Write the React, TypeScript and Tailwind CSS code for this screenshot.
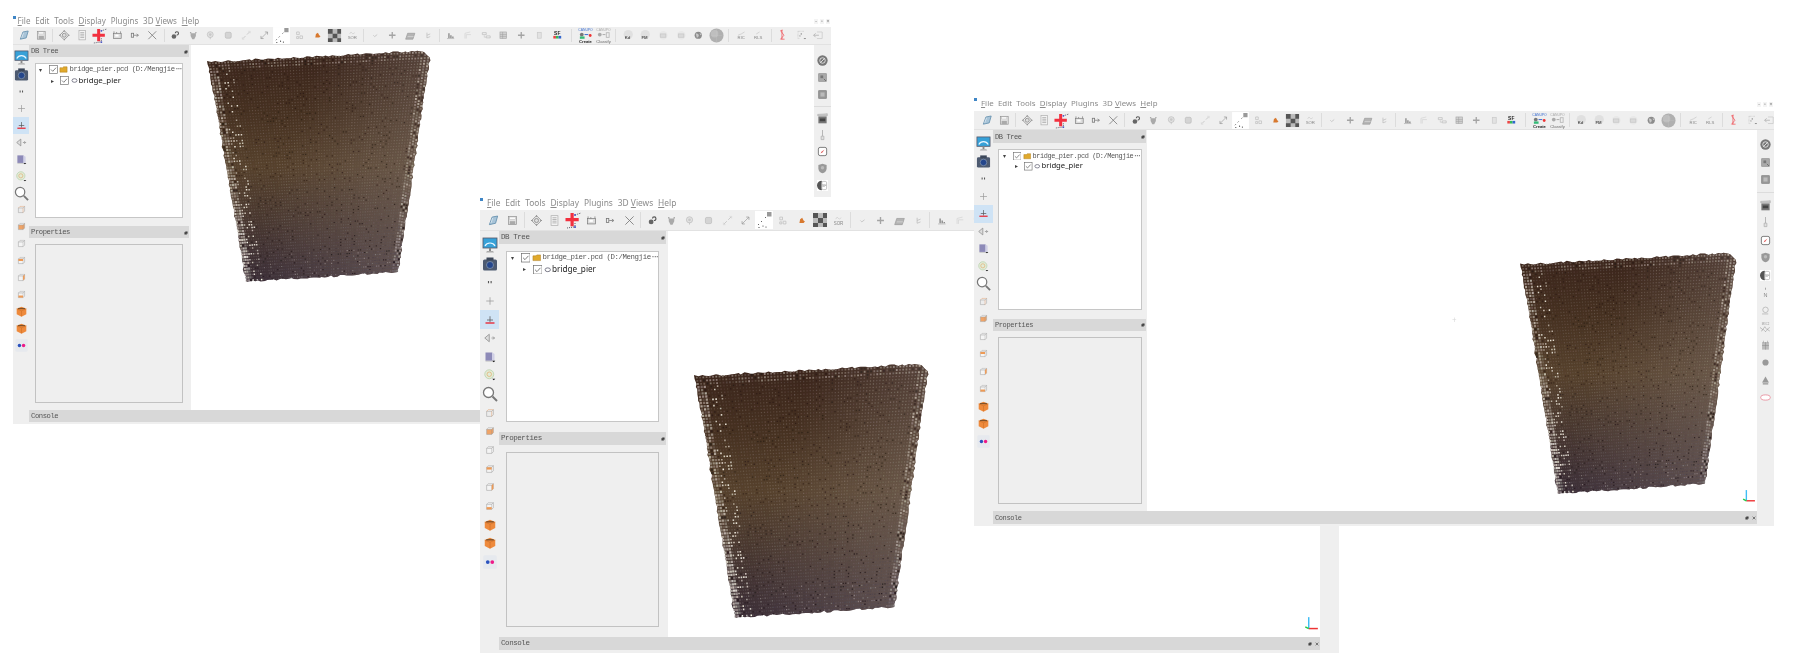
import React, { ReactNode, useId, useMemo } from "react";

const sans = "font-['Noto_Sans',sans-serif]";
const mono = "font-['Liberation_Mono',monospace]";

const T = ({ x, y, s, c = "#666", w = 400, children }: { x: number; y: number; s: number; c?: string; w?: number; children: string }) => (
  <text x={x} y={y} fontSize={s} fill={c} fontWeight={w} textAnchor="middle" fontFamily="Liberation Sans, sans-serif">{children}</text>
);

const box = (fill: string, top = "#8a8a8a") => (
  <g>
    <path d="M2 5h9l3-3v9l-3 3H2z" fill={fill} stroke="#a2a2a2" />
    <path d="M2 5l3-3h9M11 5v9" fill="none" stroke={top} strokeWidth=".6" />
  </g>
);

const crate = () => (
  <g>
    <path d="M8 1l7 3v8l-7 3.5L1 12V4z" fill="#ee8a3c" />
    <path d="M1 4l7 3 7-3M8 7v8" stroke="#c96a22" fill="none" strokeWidth=".7" />
    <path d="M3 2.8h10v1.8H3z" fill="#5c3d22" opacity=".75" />
  </g>
);

const icons: Record<string, ReactNode> = {
  open: <g><path d="M2 14L6 3l8-1.5L11 12z" fill="#a8c4d8" stroke="#5f8cab" strokeWidth="1.2" /><path d="M4 12l3-8" stroke="#e8f2f8" /></g>,
  save: <g><rect x="2" y="2" width="12" height="12" fill="#e2e2e2" stroke="#8f8f8f" /><rect x="4" y="9" width="8" height="5" fill="#aaa" /><rect x="4" y="3" width="8" height="3" fill="#fff" stroke="#aaa" strokeWidth=".5" /></g>,
  target: <g><path d="M8 1l7 7-7 7-7-7z" fill="none" stroke="#888" strokeWidth="1.2" /><circle cx="8" cy="8" r="3" fill="#ddd" stroke="#777" /><path d="M8 0v3M8 13v3M0 8h3M13 8h3" stroke="#888" /></g>,
  list: <g><rect x="3" y="1" width="10" height="14" fill="#f4f4f4" stroke="#aaa" /><path d="M5 4h6M5 6.5h6M5 9h6M5 11.5h6" stroke="#999" /></g>,
  pick: <g><path d="M5.5 1h3.2v5h5v3.2h-5v5H5.5v-5h-5V6h5z" fill="#f2303f" /><path d="M10 3l6-2M10 16v-5M2 16l7-1" stroke="#334" strokeDasharray="1 1" strokeWidth=".8" /><circle cx="10" cy="15" r="1" fill="#4a55cc" /><circle cx="10" cy="3" r="1" fill="#4a55cc" /></g>,
  bbox: <g><rect x="2" y="5" width="12" height="8" fill="#ddd" stroke="#777" /><path d="M3 2v3M7 3v2M13 2v3" stroke="#777" /><rect x="5" y="7" width="5" height="3" fill="#fff" /></g>,
  link: <g><rect x="2" y="5" width="3.5" height="6" fill="none" stroke="#777" strokeWidth="1.2" /><path d="M6 8h6M10 6l3 2-3 2" fill="none" stroke="#777" strokeWidth="1.1" /></g>,
  x: <path d="M2 2l12 12M14 2L2 14" stroke="#777" strokeWidth="1.2" />,
  merge: <g><circle cx="6" cy="10" r="3.5" fill="#666" /><path d="M8 5c0-3 5-3 5 0s-3 3-3 3" fill="none" stroke="#555" strokeWidth="1.6" /></g>,
  hand: <path d="M4 5h8v4l-2.5 5h-3L4 9zM3 3h2v2H3zM11 3h2v2h-2z" fill="#aaa" />,
  sphere: <g><circle cx="8" cy="7" r="4.5" fill="#e2e2e2" stroke="#bbb" /><circle cx="8" cy="7" r="2" fill="#c8c8c8" /><path d="M8 11v3" stroke="#bbb" /></g>,
  square: <rect x="3.5" y="3.5" width="9" height="9" rx="2" fill="#d4d4d4" stroke="#bbb" />,
  arrowsIn: <g><path d="M3 13l4-4M13 3L9 7" stroke="#c8c8c8" strokeWidth="1.4" /><path d="M11 2l3 0 0 3M2 11v3h3" fill="none" stroke="#d4d4d4" /></g>,
  arrowsOut: <g><path d="M3 13L13 3" stroke="#aaa" strokeWidth="1.2" /><path d="M9 3h4v4M3 9v4h4" fill="none" stroke="#999" strokeWidth="1.1" /></g>,
  scatter: <g><rect x="-1" y="-1" width="18" height="18" fill="#fff" /><path d="M2 13l1-1M5 10l1-1M9 6l1-1" stroke="#555" strokeWidth=".9" /><rect x="11" y="0" width="4.5" height="4.5" fill="#999" /><circle cx="7" cy="14" r=".6" fill="#333" /><circle cx="3" cy="15.5" r=".6" fill="#333" /><circle cx="10" cy="15" r=".6" fill="#333" /></g>,
  sample: <path d="M4 3h4v4H4zM9 9h4v4H9zM4 10h3v3H4z" fill="none" stroke="#bbb" />,
  orange: <path d="M6 6l3-2 2 4 2 1.5-2 2H5z" fill="#d8792f" />,
  checker: <g><rect x="1" y="1" width="14" height="14" fill="#bbb" /><path d="M1 1h5v5H1zM11 1h4v5h-4zM6 6h5v5H6zM1 11h5v4H1zM11 11h4v4h-4z" fill="#555" /></g>,
  sor: <g><path d="M4 6l2-3 3 3 3-2" fill="none" stroke="#ccc" /><T x={8} y={14} s={6.5} c="#888">SOR</T></g>,
  check: <path d="M5 8l2 2 4-3" fill="none" stroke="#bbb" strokeWidth="1.1" />,
  plus: <path d="M7 3h2v4h4v2H9v4H7V9H3V7h4z" fill="#a4a4a4" />,
  plane: <g><path d="M1 14l3-9h11l-3 9z" fill="#b4b4b4" stroke="#999" /><path d="M4 10h9" stroke="#ddd" /></g>,
  tree: <path d="M6 4v8M6 8l5-2M6 12l5-2" fill="none" stroke="#bbb" strokeWidth="1.1" />,
  hist: <g><path d="M5 5h2v7H5zM8 8h2v4H8zM11 10h2v2h-2z" fill="#888" /><path d="M3 13h11" stroke="#aaa" /></g>,
  gridA: <path d="M3 13V5l8-2M5 13V7h7" fill="none" stroke="#d4d4d4" strokeWidth="1.1" />,
  gridB: <g><path d="M2 4h6v3H2zM8 9h6v3H8z" fill="none" stroke="#bbb" /><path d="M5 8v3h3" fill="none" stroke="#c8c8c8" /></g>,
  gridC: <g><rect x="3" y="3" width="10" height="10" fill="#d0d0d0" stroke="#aaa" /><path d="M3 7h10M3 10h10M7 3v10" stroke="#999" strokeWidth=".7" /></g>,
  stack: <rect x="5" y="3.5" width="6" height="9" fill="#e2e2e2" stroke="#c8c8c8" />,
  sf: <g><T x={8} y={7} s={7.5} c="#222" w={700}>SF</T><rect x="2" y="9" width="4" height="4" fill="#e44" /><rect x="6" y="9" width="4" height="4" fill="#3b5" /><rect x="10" y="9" width="4" height="4" fill="#36c" /></g>,
  canCreate: <g><T x={8} y={3} s={3.6} c="#3c6fd0">CANUPO</T><circle cx="4" cy="7" r="2" fill="#777" /><path d="M7 7h4" stroke="#36c" /><circle cx="13" cy="8" r="1.5" fill="#e33" /><rect x="2" y="9" width="5" height="2.5" fill="#3b7" /><T x={8} y={16} s={4.4} c="#222" w={700}>Create</T></g>,
  canClassify: <g><T x={8} y={3} s={3.6} c="#aaa">CANUPO</T><circle cx="4" cy="7" r="2" fill="#aaa" /><path d="M7 7h3" stroke="#aaa" /><rect x="11" y="5" width="3" height="5" fill="none" stroke="#bbb" /><T x={8} y={16} s={4.4} c="#666">Classify</T></g>,
  kd: <g><circle cx="8" cy="7" r="7" fill="#e0e0e0" /><T x={7} y={14} s={6.5} c="#555" w={700}>Kd</T></g>,
  fm: <g><circle cx="8" cy="7" r="7" fill="#e0e0e0" /><T x={7} y={14} s={6.5} c="#555" w={700}>FM</T></g>,
  cir2: <g><circle cx="8" cy="8" r="6.5" fill="#e8e8e8" /><rect x="4" y="6" width="8" height="5" fill="#dadada" stroke="#c4c4c4" /></g>,
  globe: <g><circle cx="8" cy="8" r="5.5" fill="#8c8c8c" /><path d="M4 5l4 1 1 3-3 3zM10 4l3 3-2 1z" fill="#c8c8c8" /></g>,
  ball: <g><circle cx="8" cy="8" r="7.5" fill="#b0b0b0" /><path d="M2 8h12M8 1v14" stroke="#bbb" strokeWidth=".6" /><circle cx="6" cy="6" r="4" fill="#c8c8c8" opacity=".6" /></g>,
  ric: <g><path d="M3 8l5-2M8 6l5-3" stroke="#c4c4c4" /><T x={8} y={14} s={6.5} c="#888">RIC</T></g>,
  rls: <g><path d="M5 6l5-3" stroke="#c4c4c4" /><T x={8} y={14} s={6.5} c="#888">RLS</T></g>,
  redS: <path d="M7 0L4 1l5 7-5 6h6M6 0v14" fill="none" stroke="#ef4d52" strokeWidth="1.1" />,
  scatter2: <g><path d="M3 2h9M3 2v11h2" fill="none" stroke="#bbb" strokeDasharray="1 1" /><circle cx="8" cy="6" r="1" fill="#777" /><circle cx="6" cy="9" r="1" fill="#999" /><path d="M12 13h3" stroke="#888" strokeWidth="1.4" /></g>,
  exportArrow: <g><path d="M6 3h8v10H6" fill="none" stroke="#c4c4c4" /><path d="M1 8h8M4 5L1 8l3 3" fill="none" stroke="#aaa" strokeWidth="1.1" /></g>,
  monitor: <g><rect x="1" y="1" width="14" height="10" fill="#37a1d8" stroke="#556" strokeWidth=".8" /><path d="M3 9c2-4 8-4 10 0" fill="none" stroke="#eaf6ff" strokeWidth="1.2" /><path d="M5 14h6l1 1.5H4z" fill="#aaa" /><path d="M8 11v3" stroke="#888" strokeWidth="2" /></g>,
  camera: <g><rect x="1" y="3.5" width="14" height="11" rx="1.5" fill="#4d5a70" /><rect x="4.5" y="1.5" width="7" height="3" fill="#3c4759" /><circle cx="8" cy="9" r="3.5" fill="#24468c" stroke="#9ab" strokeWidth=".6" /></g>,
  mm: <path d="M6 6.5v3M9.5 6.5v3" stroke="#555" strokeWidth="1.5" />,
  thinPlus: <path d="M8 3v10M3 8h10" stroke="#999" strokeWidth="1" />,
  ground: <g><path d="M8 3v8M4 8h8" stroke="#555" strokeWidth="1" /><path d="M2 11h12v2H2z" fill="#e63946" /></g>,
  cone: <g><path d="M1 8l6-5v10z" fill="#ddd" stroke="#888" /><path d="M10 8h4M12 6l2 2-2 2" fill="none" stroke="#888" /></g>,
  cube: <g><rect x="2" y="2" width="9" height="11" fill="#8d8ab8" /><path d="M11 2l3 2v9h-3z" fill="#d0cfe6" /><path d="M2 13h12v1H2z" fill="#bbb" /><path d="M11 13h4l-2 2z" fill="#111" /></g>,
  disc: <g><circle cx="7" cy="7" r="6" fill="#e2ebd8" stroke="#b8d0a8" /><circle cx="7" cy="7" r="3" fill="none" stroke="#e0b070" /><path d="M11 13h4l-2 2z" fill="#111" /></g>,
  magnifier: <g><circle cx="6.5" cy="6.5" r="5" fill="#fff" stroke="#777" strokeWidth="1.3" /><path d="M10.5 10.5l4.5 4.5" stroke="#777" strokeWidth="2" /></g>,
  v1: box("#ececec", "#e07a2e"),
  v2: box("#f0a467"),
  v3: box("#f4f4f4"),
  v4: <g>{box("#f4f4f4")}<path d="M2 5h9v4H2z" fill="#ee9a55" /></g>,
  v5: <g>{box("#f4f4f4")}<path d="M11 5l3-3v9l-3 3z" fill="#ee9a55" /></g>,
  v6: <g>{box("#f4f4f4")}<path d="M2 10h9v4H2z" fill="#ee9a55" /></g>,
  front: crate(),
  back: crate(),
  flickr: <g><rect x="-1" y="-1" width="18" height="18" rx="2" fill="#e6e9ee" /><circle cx="5" cy="8" r="2.5" fill="#2a52be" /><circle cx="11" cy="8" r="2.5" fill="#ee1a88" /></g>,
  ban: <g><circle cx="8" cy="8" r="7.5" fill="#777" /><circle cx="8" cy="8" r="4" fill="none" stroke="#eee" strokeWidth="1.2" /><path d="M5 11l6-6" stroke="#eee" strokeWidth="1.2" /></g>,
  sq1: <g><rect x="2.5" y="2.5" width="11" height="11" fill="#aaa" stroke="#888" /><rect x="5" y="5" width="4" height="4" fill="#777" /><path d="M10 10l3 3" stroke="#555" /></g>,
  sq2: <g><rect x="2.5" y="2.5" width="11" height="11" fill="#999" stroke="#777" /><rect x="5" y="5" width="6" height="6" fill="#bbb" /></g>,
  clap: <g><rect x="2" y="5" width="12" height="10" fill="#777" /><path d="M1 2l14-1v3H1z" fill="#ccc" stroke="#888" strokeWidth=".5" /><rect x="4" y="8" width="8" height="4" fill="#444" /></g>,
  probe: <g><path d="M8 0v9" stroke="#aaa" strokeWidth="1.2" /><path d="M6 9h4v5H6z" fill="#e0e0e0" stroke="#aaa" /></g>,
  compass: <g><rect x="2" y="2" width="12" height="12" rx="2.5" fill="#fff" stroke="#666" strokeWidth="1.2" /><path d="M11 5L8 9 5 11l2-3z" fill="#e05555" /></g>,
  shield: <g><path d="M2 3l6-2 6 2v5c0 4-3 6-6 7-3-1-6-3-6-7z" fill="#999" /><circle cx="8" cy="7" r="2.5" fill="#bbb" /></g>,
  head: <g><rect x="0" y="0" width="16" height="16" fill="#fff" /><path d="M7 1a7 7 0 000 14z" fill="#555" /><rect x="7" y="2" width="7" height="12" rx="2" fill="#fff" stroke="#aaa" /><T x={10.5} y={10} s={5} c="#888">SF</T></g>,
  north: <g><T x={8} y={14} s={8} c="#888">N</T><path d="M8 1v3" stroke="#888" /></g>,
  bubble: <g><circle cx="8" cy="7" r="4" fill="none" stroke="#aaa" /><path d="M3 13h9" stroke="#aaa" /></g>,
  mesh: <g><T x={8} y={4} s={4} c="#999">M3C2</T><path d="M0 8l4 3 3-4 3 4 4-3M2 13l3-2 3 3 3-3 3 2" fill="none" stroke="#777" strokeDasharray="1 .6" /></g>,
  sq3: <g><rect x="3" y="3" width="10" height="11" fill="#bbb" /><path d="M5 1v3M11 1v3M3 8h10M8 3v11" stroke="#888" strokeWidth=".7" /></g>,
  dot: <circle cx="8" cy="8" r="4.5" fill="#999" />,
  pyr: <g><path d="M8 2l5 9H3z" fill="#999" /><rect x="4" y="11" width="8" height="3" fill="#aaa" /></g>,
  ellipse: <ellipse cx="8" cy="8" rx="7" ry="3.8" fill="#fff" stroke="#e77e8f" strokeWidth="1.1" />,
};

const Icon = ({ name, className }: { name: string; className: string }) => (
  <svg viewBox="0 0 16 16" className={`${className} overflow-visible`}>{icons[name]}</svg>
);

const mix = (a: number[], b: number[], f: number) => a.map((v, i) => v + (b[i] - v) * f);
const hex = (c: number[]) => "#" + c.map((v) => Math.min(255, Math.round(Math.max(0, v) / 6) * 6).toString(16).padStart(2, "0")).join("");

type PierData = { outline: string; parts: [string, string][] };

function buildPier(): PierData {
  let seed = 12345;
  const rnd = () => {
    seed = (seed * 1664525 + 1013904223) >>> 0;
    return seed / 4294967296;
  };
  const stops = [[58, 36, 28], [68, 46, 34], [84, 64, 46], [70, 54, 50], [54, 42, 54]];
  const baseAt = (t: number) => {
    const p = Math.min(0.999, t) * 4;
    const i = Math.floor(p);
    return mix(stops[i], stops[i + 1], p - i);
  };
  const map = new Map<string, string>();
  const add = (col: string, x: number, y: number, w: number, h: number) => {
    map.set(col, (map.get(col) || "") + `M${x.toFixed(1)} ${y.toFixed(1)}h${w}v${h}h-${w}z`);
  };
  const pos = (s: number, t: number) => {
    const left = 38 * t;
    const right = 222 - 32 * t;
    const x = left + (right - left) * s;
    const topY = s > 0.965 ? 1 + (s - 0.965) * 190 : 12 - 11.5 * s;
    const botY = 232 - 10 * s;
    return [x, topY + t * (botY - topY)];
  };
  const pts: string[] = [];
  const jag = () => (rnd() - 0.5) * 2;
  const walk = (fn: (k: number) => number[], n: number) => {
    for (let k = 0; k < n; k++) {
      const [x, y] = fn(k / n);
      pts.push(`${(x + jag()).toFixed(1)},${(y + jag()).toFixed(1)}`);
    }
  };
  walk((k) => pos(k, 0), 70);
  walk((k) => pos(1, k), 70);
  walk((k) => pos(1 - k, 1), 50);
  walk((k) => pos(0, 1 - k), 70);

  const cols = 72;
  const rows = 76;
  const colNoise = Array.from({ length: cols }, () => rnd() * 0.07);
  for (let j = 0; j < rows; j++) {
    for (let i = 0; i < cols; i++) {
      const s = (i + 0.5) / cols;
      const t = (j + 0.5) / rows;
      const [x, y] = pos(s, t);
      let base = baseAt(t);
      const rg = Math.max(0, (s - 0.5) / 0.5) * Math.max(0, 1 - t * 1.25);
      base = mix(base, [126, 114, 108], rg * 0.6);
      let f = 0.02 + rnd() * 0.08 + s * 0.08 + colNoise[i];
      let size = 1.2;
      if (s < 0.035) {
        f = 0.15 + rnd() * 0.5;
        size = 2.1;
      } else if (s < 0.11) {
        if (rnd() < 0.3) {
          f = 0.5 + rnd() * 0.45;
          size = 1.5;
        }
      }
      if (t < 0.035) {
        f = 0.1 + rnd() * 0.35;
        size = 1.7;
      }
      if (s > 0.96) {
        f = 0.15 + rnd() * 0.4;
        size = 1.9;
      }
      if (t > 0.65 && s < 0.06) f = Math.min(1, f + 0.12);
      if (t > 0.88 && rnd() < 0.12) f += 0.2;
      const dark = rnd() < 0.1;
      const c = dark ? mix(base, [22, 14, 12], 0.4) : mix(base, [248, 244, 232], f);
      add(hex(c), x - size / 2, y - size / 2, size, size);
    }
  }
  return { outline: pts.join(" "), parts: [...map.entries()] };
}

const Pier = ({ className }: { className: string }) => {
  const data = useMemo(buildPier, []);
  const raw = useId().replace(/[^a-zA-Z0-9]/g, "");
  return (
    <svg viewBox="0 0 222 232" preserveAspectRatio="none" className={`absolute overflow-visible ${className}`}>
      <defs>
        <linearGradient id={`v${raw}`} x1="0" y1="0" x2="0" y2="1">
          <stop offset="0" stopColor="#3a241b" />
          <stop offset="0.25" stopColor="#453020" />
          <stop offset="0.5" stopColor="#56412c" />
          <stop offset="0.75" stopColor="#483730" />
          <stop offset="1" stopColor="#372a34" />
        </linearGradient>
        <linearGradient id={`h${raw}`} x1="0" y1="0" x2="1" y2="0.35">
          <stop offset="0.45" stopColor="#7e6f68" stopOpacity="0" />
          <stop offset="1" stopColor="#7e6f68" stopOpacity="0.5" />
        </linearGradient>
      </defs>
      <polygon points={data.outline} fill={`url(#v${raw})`} />
      <polygon points={data.outline} fill={`url(#h${raw})`} />
      {data.parts.map(([c, d]) => <path key={c} d={d} fill={c} />)}
    </svg>
  );
};

const Axis = ({ className }: { className: string }) => (
  <svg viewBox="0 0 14 14" className={`absolute ${className}`}>
    <path d="M5 1v10" stroke="#3fbdf5" strokeWidth="1.3" />
    <path d="M5 11h8" stroke="#ee3333" strokeWidth="1.3" />
    <path d="M5 11L2 9.5" stroke="#22cc44" strokeWidth="1.3" />
  </svg>
);

const Mini = ({ close = false }: { close?: boolean }) => (
  <span className="flex items-center gap-[3px] ml-auto pr-[1px]">
    <svg viewBox="0 0 6 6" className="w-[4px] h-[4px]"><path d="M1 2h3v3H1zM2 1h3v3" fill="#444" stroke="#444" strokeWidth=".6" /></svg>
    {close && <svg viewBox="0 0 6 6" className="w-[4px] h-[4px]"><path d="M1 1l4 4M5 1L1 5" stroke="#444" /></svg>}
  </span>
);

const Under = ({ text, at }: { text: string; at: number }) => (
  <span>{text.slice(0, at)}<span className="underline">{text[at]}</span>{text.slice(at + 1)}</span>
);

type Cfg = {
  pos: string; menu: string; tool: string; btn: string; ic: string; big: string; left: string; lbtn: string; lic: string; right: string; rsep: string;
  dock: string; head: string; hfont: string; treeBox: string; treePad: string; propBox: string; row: string; rowGap: string; indent: string; cb: string; file: string; item: string; consoleBar: string; consoleWrap: string;
  canvas: ReactNode; caret: string; sect: string;
};

const group1 = [["open", "save"], ["target", "list", "pick", "bbox", "link", "x"], ["merge", "hand", "sphere", "square", "arrowsIn", "arrowsOut", "scatter", "sample", "orange", "checker", "sor"], ["check", "plus", "plane", "tree"], ["hist", "gridA", "gridB", "gridC", "plus", "stack", "sf"], ["canCreate", "canClassify"], ["kd", "fm", "cir2", "cir2", "globe", "ball"], ["ric", "rls"], ["redS", "scatter2", "exportArrow"]];
const leftIcons = ["monitor", "camera", "mm", "thinPlus", "ground", "cone", "cube", "disc", "magnifier", "v1", "v2", "v3", "v4", "v5", "v6", "front", "back", "flickr"];
const rightA = ["ban", "sq1", "sq2"];
const rightB = ["clap", "probe", "compass", "shield", "head", "north", "bubble", "mesh", "sq3", "dot", "pyr", "ellipse"];
const bigTop = ["pick", "scatter", "canCreate", "canClassify", "ball", "checker"];
const bigLeft = ["monitor", "camera", "magnifier"];
const smallLeft = ["v1", "v2", "v3", "v4", "v5", "v6"];

const Check = ({ c }: { c: string }) => (
  <svg viewBox="0 0 10 10" className={c}>
    <rect x=".5" y=".5" width="9" height="9" fill="#fff" stroke="#666" strokeWidth=".7" />
    <path d="M2.2 5l2 2 3.6-4" fill="none" stroke="#555" strokeWidth=".8" />
  </svg>
);

const Window = ({ c }: { c: Cfg }) => (
  <div className={`absolute flex flex-col bg-white blur-[0.35px] ${c.pos}`}>
    <div className={`flex items-center shrink-0 relative text-[#8b8b8b] ${sans} ${c.menu}`}>
      <span className="absolute left-0 top-[1px] w-[3px] h-[3px] bg-[#3f86c6]" />
      <Under text="File" at={0} /><span>Edit</span><span>Tools</span><Under text="Display" at={0} /><span>Plugins</span><Under text="3D Views" at={3} /><Under text="Help" at={0} />
      <span className="ml-auto flex items-center gap-[2px] pr-[1px] text-[5px] leading-none text-[#777]">
        <span className="w-[4px] h-[5px] bg-[#f4f4f4] text-center">-</span>
        <span className="w-[4px] h-[5px] bg-[#f4f4f4] text-center">▫</span>
        <span className="w-[4px] h-[5px] bg-[#f4f4f4] text-center">×</span>
      </span>
    </div>
    <div className={`flex items-center shrink-0 overflow-hidden bg-[#efefef] border-b border-[#e2e2e2] ${c.tool}`}>
      {group1.map((g, gi) => (
        <React.Fragment key={gi}>
          {gi > 0 && <span className={`self-stretch my-[2px] w-[1px] shrink-0 bg-[#dcdcdc] ${gi === 5 ? "mx-[5px]" : gi > 5 ? "mx-[3px]" : "mx-[2px]"}`} />}
          {g.map((n, i) => (
            <span key={i} className={`flex items-center justify-center shrink-0 ${c.btn}`}>
              <Icon name={n} className={bigTop.includes(n) ? c.big : c.ic} />
            </span>
          ))}
        </React.Fragment>
      ))}
    </div>
    <div className="flex flex-1 min-h-0">
      <div className={`flex flex-col shrink-0 bg-[#efefef] ${c.left}`}>
        {leftIcons.map((n) => (
          <span key={n} className={`flex items-center justify-center shrink-0 ${c.lbtn} ${n === "ground" ? "bg-[#cfe3f5]" : ""}`}>
            <Icon name={n} className={`${bigLeft.includes(n) ? c.big : c.lic} ${smallLeft.includes(n) ? "scale-75" : ""}`} />
          </span>
        ))}
      </div>
      <div className="flex flex-col flex-1 min-w-0">
        <div className="flex flex-1 min-h-0">
          <div className={`shrink-0 bg-[#efefef] ${c.dock}`}>
            <div className={`flex items-center bg-[#d8d8d8] text-[#555] pt-[1px] ${mono} ${c.head} ${c.hfont}`}>DB Tree<Mini /></div>
            <div className={c.sect}>
              <div className={`bg-white border border-[#c6c6c6] overflow-hidden ${c.treeBox} ${c.treePad}`}>
                <div className={`flex items-center whitespace-nowrap ${c.row} ${c.rowGap}`}>
                  <span className={`text-[#444] leading-none ${c.caret}`}>▾</span>
                  <Check c={c.cb} />
                  <svg viewBox="0 0 10 10" className={c.cb}><path d="M1 3h3l1-1h4v6H1z" fill="#e0a92c" stroke="#a8781a" strokeWidth=".5" /></svg>
                  <span className={`text-[#555] ${mono} ${c.file}`}>bridge_pier.pcd (D:/Mengjie<span className="tracking-[-2.2px]">···</span></span>
                </div>
                <div className={`flex items-center whitespace-nowrap ${c.row} ${c.rowGap} ${c.indent}`}>
                  <span className={`text-[#444] leading-none ${c.caret}`}>▸</span>
                  <Check c={c.cb} />
                  <svg viewBox="0 0 10 10" className={`${c.cb} -ml-[1px] -mr-[1.5px]`}><ellipse cx="5" cy="5" rx="2.8" ry="2" fill="none" stroke="#667" strokeWidth=".9" /></svg>
                  <span className={`text-[#222] ${sans} ${c.item}`}>bridge_pier</span>
                </div>
              </div>
            </div>
            <div className={`flex items-center bg-[#d8d8d8] text-[#555] pt-[1px] ${mono} ${c.head} ${c.hfont}`}>Properties<Mini /></div>
            <div className={c.sect}>
              <div className={`bg-[#efefef] border border-[#c2c2c2] ${c.propBox}`} />
            </div>
          </div>
          <div className="relative flex-1 bg-white overflow-hidden">{c.canvas}</div>
        </div>
        <div className={`shrink-0 bg-[#efefef] ${c.consoleWrap}`}>
          <div className={`flex items-center bg-[#d8d8d8] text-[#555] pt-[1px] ${mono} ${c.consoleBar} ${c.hfont}`}>Console<Mini close /></div>
        </div>
      </div>
      <div className={`flex flex-col shrink-0 items-center bg-[#efefef] overflow-hidden ${c.right}`}>
        {rightA.map((n) => (
          <span key={n} className={`flex items-center justify-center shrink-0 ${c.lbtn}`}><Icon name={n} className={c.lic} /></span>
        ))}
        <span className={`w-full h-[1px] shrink-0 bg-[#dcdcdc] ${c.rsep}`} />
        {rightB.map((n) => (
          <span key={n} className={`flex items-center justify-center shrink-0 ${c.lbtn}`}><Icon name={n} className={c.lic} /></span>
        ))}
      </div>
    </div>
  </div>
);

const A: Cfg = {
  pos: "left-[13px] top-[15px] w-[818px] h-[409px]",
  menu: "h-[12px] pl-[4.6px] gap-[4.8px] text-[8px]",
  tool: "h-[18px] pl-[2px]",
  btn: "w-[17.7px]",
  ic: "w-[10.5px] h-[10.5px]",
  big: "w-[15px] h-[15px]",
  left: "w-[16px] pt-[4.5px]",
  lbtn: "h-[16.9px] w-full",
  lic: "w-[11px] h-[11px]",
  right: "w-[17px] pt-[7px]",
  rsep: "my-[3px]",
  dock: "w-[162px] pr-[2px]",
  head: "h-[12px] pl-[2px]",
  hfont: "text-[7.2px] tracking-[-0.42px]",
  sect: "px-[6px] pt-[6px] pb-[8px]",
  treeBox: "h-[155px]",
  treePad: "pl-[3px]",
  propBox: "h-[159px]",
  row: "h-[11px]",
  rowGap: "gap-[1.5px]",
  indent: "pl-[11.5px]",
  cb: "w-[9px] h-[9px] shrink-0",
  caret: "text-[6px] w-[8px] shrink-0",
  file: "text-[7.2px] tracking-[-0.42px]",
  item: "text-[7.9px]",
  consoleWrap: "h-[14px] pb-[1px]",
  consoleBar: "h-[12px] pl-[2px]",
  canvas: <Pier className="left-[17px] top-[5px] w-[222px] h-[232px]" />,
};

const B: Cfg = {
  pos: "left-[480px] top-[197px] w-[859px] h-[456px]",
  menu: "h-[13px] pl-[7px] gap-[4.9px] text-[8.4px]",
  tool: "h-[21px] pl-[4.7px]",
  btn: "w-[18.6px]",
  ic: "w-[11px] h-[11px]",
  big: "w-[16px] h-[16px]",
  left: "w-[19px] pt-[4.7px]",
  lbtn: "h-[18.65px] w-full",
  lic: "w-[12px] h-[12px]",
  right: "w-[19px] pt-[7px]",
  rsep: "my-[3.5px]",
  dock: "w-[169px] pr-[2px]",
  head: "h-[13px] pl-[2px]",
  hfont: "text-[7.5px] tracking-[-0.43px]",
  sect: "px-[7px] pt-[7px] pb-[10px]",
  treeBox: "h-[171px]",
  treePad: "pl-[4px]",
  propBox: "h-[175px]",
  row: "h-[11.5px]",
  rowGap: "gap-[1.5px]",
  indent: "pl-[12px]",
  cb: "w-[9.5px] h-[9.5px] shrink-0",
  caret: "text-[6px] w-[8px] shrink-0",
  file: "text-[7.4px] tracking-[-0.43px]",
  item: "text-[8.2px]",
  consoleWrap: "h-[16px] pb-[3px]",
  consoleBar: "h-[13px] pl-[2px]",
  canvas: (
    <>
      <Pier className="left-[27px] top-[132px] w-[233px] h-[255px]" />
      <Axis className="right-[1px] bottom-[5px] w-[16px] h-[16px]" />
    </>
  ),
};

const C: Cfg = {
  pos: "left-[974px] top-[97px] w-[800px] h-[429px]",
  menu: "h-[14px] pl-[7px] gap-[4.3px] text-[7.9px]",
  tool: "h-[19px] pl-[4.3px]",
  btn: "w-[17.4px]",
  ic: "w-[10.5px] h-[10.5px]",
  big: "w-[15px] h-[15px]",
  left: "w-[19px] pt-[5.2px]",
  lbtn: "h-[17.5px] w-full",
  lic: "w-[11px] h-[11px]",
  right: "w-[17px] pt-[6px]",
  rsep: "my-[3.5px]",
  dock: "w-[154px] pr-[1px]",
  head: "h-[12.5px] pl-[2px]",
  hfont: "text-[7px] tracking-[-0.4px]",
  sect: "pl-[5px] pr-[4px] pt-[6px] pb-[9px]",
  treeBox: "h-[161px]",
  treePad: "pl-[4px] pt-[1px]",
  propBox: "h-[167px]",
  row: "h-[10.5px]",
  rowGap: "gap-[1.5px]",
  indent: "pl-[11.5px]",
  cb: "w-[8.5px] h-[8.5px] shrink-0",
  caret: "text-[6px] w-[8px] shrink-0",
  file: "text-[6.9px] tracking-[-0.4px]",
  item: "text-[7.7px]",
  consoleWrap: "h-[15px] pb-[2px]",
  consoleBar: "h-[13px] pl-[2px]",
  canvas: (
    <>
      <span className="absolute left-[305px] top-[186px] text-[8px] leading-none text-[#d8d8d8]">+</span>
      <Pier className="left-[374px] top-[122px] w-[215px] h-[242px]" />
      <Axis className="right-[1px] bottom-[7px] w-[15px] h-[15px]" />
    </>
  ),
};

export default function App() {
  return (
    <div className="relative w-[1805px] h-[667px] overflow-hidden bg-white">
      <Window c={A} />
      <Window c={B} />
      <Window c={C} />
    </div>
  );
}
